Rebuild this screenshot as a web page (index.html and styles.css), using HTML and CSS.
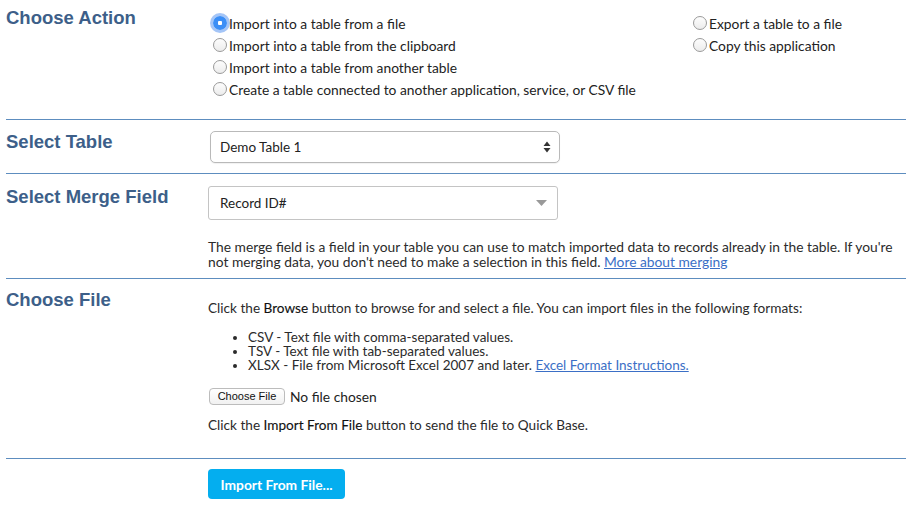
FILE: index.html
```html
<!DOCTYPE html>
<html lang="en">
<head>
<meta charset="utf-8">
<title>Import / Export</title>
<link rel="stylesheet" href="styles.css">
</head>
<body>
<div class="page">
  <section class="row row-action">
    <h2 class="label">Choose Action</h2>
    <div class="content actions">
      <div class="radio-col">
        <label class="radio"><span class="dot checked"></span>Import into a table from a file</label>
        <label class="radio"><span class="dot"></span>Import into a table from the clipboard</label>
        <label class="radio"><span class="dot"></span>Import into a table from another table</label>
        <label class="radio"><span class="dot"></span>Create a table connected to another application, service, or CSV file</label>
      </div>
      <div class="radio-col">
        <label class="radio"><span class="dot"></span>Export a table to a file</label>
        <label class="radio"><span class="dot"></span>Copy this application</label>
      </div>
    </div>
  </section>

  <section class="row row-table">
    <h2 class="label">Select Table</h2>
    <div class="content">
      <div class="select select-mac">
        <span>Demo Table 1</span>
        <svg width="8" height="12" viewBox="0 0 8 12"><path d="M4 0.5 L7.5 5 L0.5 5 Z M0.5 7 L7.5 7 L4 11.5 Z" fill="#333"/></svg>
      </div>
    </div>
  </section>

  <section class="row row-merge">
    <h2 class="label">Select Merge Field</h2>
    <div class="content">
      <div class="select select-flat">
        <span>Record ID#</span>
        <svg width="11" height="6" viewBox="0 0 11 6"><path d="M0 0 L11 0 L5.5 6 Z" fill="#999"/></svg>
      </div>
      <p class="desc">The merge field is a field in your table you can use to match imported data to records already in the table. If you're not merging data, you don't need to make a selection in this field. <a href="#">More about merging</a></p>
    </div>
  </section>

  <section class="row row-file">
    <h2 class="label">Choose File</h2>
    <div class="content">
      <p class="intro">Click the <span class="em">Browse</span> button to browse for and select a file. You can import files in the following formats:</p>
      <ul class="formats">
        <li>CSV - Text file with comma-separated values.</li>
        <li>TSV - Text file with tab-separated values.</li>
        <li>XLSX - File from Microsoft Excel 2007 and later. <a href="#">Excel Format Instructions.</a></li>
      </ul>
      <div class="file">
        <span class="file-btn">Choose File</span>
        <span class="file-none">No file chosen</span>
      </div>
      <p class="outro">Click the <span class="em">Import From File</span> button to send the file to Quick Base.</p>
    </div>
  </section>

  <section class="row row-submit">
    <div class="label"></div>
    <div class="content">
      <button class="import-btn" type="button">Import From File...</button>
    </div>
  </section>
</div>
</body>
</html>
```

FILE: styles.css
```css
html, body {
  margin: 0;
  padding: 0;
  background: #ffffff;
}

body {
  font-family: Lato, "Noto Sans", sans-serif;
  font-size: 13.8px;
  color: #2b2b2b;
}

.page {
  padding: 0 6px;
}

.row {
  display: flex;
  align-items: flex-start;
}

.row + .row {
  border-top: 1px solid #5d8dbf;
}

.label {
  width: 202px;
  flex: none;
  margin: 0;
  font-family: "Liberation Sans", Arial, sans-serif;
  font-weight: bold;
  font-size: 18.5px;
  line-height: 21px;
  color: #3d5f89;
}

.content {
  flex: 1;
  min-width: 0;
}

/* Choose Action */
.row-action {
  padding: 7px 0 19px;
}

.actions {
  display: grid;
  grid-template-columns: 480px auto;
  padding-top: 5px;
  padding-left: 5px;
}

.radio {
  display: flex;
  align-items: center;
  height: 22px;
  white-space: nowrap;
  color: #222;
}

.dot {
  width: 14px;
  height: 14px;
  box-sizing: border-box;
  border: 1px solid #9a9a9a;
  border-radius: 50%;
  background: linear-gradient(#fdfdfd, #ececec);
  margin-right: 2px;
  flex: none;
}

.dot.checked {
  border: none;
  background: radial-gradient(circle, #ffffff 0 2px, #3a8ef6 2.5px);
  box-shadow: 0 0 0 3px rgba(90, 150, 240, 0.55);
}

/* Select boxes */
.select {
  display: flex;
  align-items: center;
  justify-content: space-between;
  box-sizing: border-box;
  width: 350px;
  font-size: 13.5px;
  color: #222;
  background: #fff;
}

.row-table {
  padding: 11px 0 10px;
}

.select-mac {
  margin-left: 2px;
  height: 32px;
  padding: 0 8px 0 9px;
  border: 1px solid #b9b9b9;
  border-radius: 5px;
  box-shadow: 0 1px 1px rgba(0, 0, 0, 0.06);
}

.row-merge {
  padding: 12px 0 9px;
}

.select-flat {
  height: 34px;
  padding: 0 10px 0 11px;
  border: 1px solid #c4c4c4;
  border-radius: 3px;
}

.desc {
  margin: 19px 0 0;
  line-height: 15px;
  color: #2b2b2b;
}

a {
  color: #3b6fc6;
  text-decoration: underline;
}

/* Choose File */
.row-file {
  padding: 10px 0 0;
}

.row-file .content {
  padding-top: 12px;
  padding-bottom: 25px;
}

.intro,
.outro {
  margin: 0;
  line-height: 15px;
  font-size: 13.6px;
}

.em {
  color: #111;
  -webkit-text-stroke: 0.12px #111;
}

.formats {
  margin: 14px 0 0;
  padding-left: 40px;
  font-size: 13.5px;
  line-height: 14px;
}

.file {
  display: flex;
  align-items: center;
  gap: 5px;
  margin-top: 15px;
  height: 18px;
}

.file-btn {
  display: inline-flex;
  align-items: center;
  justify-content: center;
  box-sizing: border-box;
  width: 76px;
  height: 17px;
  margin-left: 1px;
  font-family: "Liberation Sans", Arial, sans-serif;
  font-size: 11px;
  color: #111;
  border: 1px solid #bcbcbc;
  border-radius: 4px;
  background: linear-gradient(#ffffff, #f1f1f1);
}

.file-none {
  color: #222;
}

.outro {
  margin-top: 13px;
}

/* Submit */
.row-submit {
  padding: 10px 0 10px;
}

.import-btn {
  width: 137px;
  height: 30px;
  border: none;
  border-radius: 4px;
  background: #04aeef;
  color: #ffffff;
  font-family: Lato, "Noto Sans", sans-serif;
  font-weight: bold;
  font-size: 13.8px;
  padding: 0;
  cursor: pointer;
}
```
